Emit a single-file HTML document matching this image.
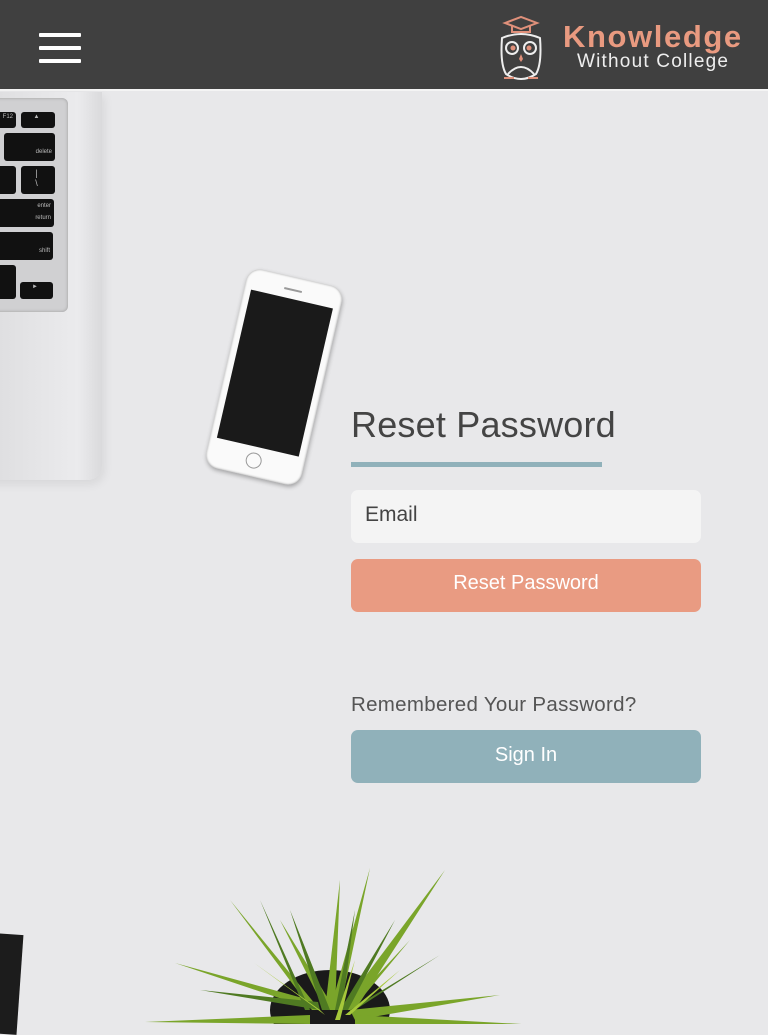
<!DOCTYPE html>
<html><head><meta charset="utf-8"><style>
*{margin:0;padding:0;box-sizing:border-box}
body{width:768px;height:1024px;overflow:hidden;background:#e8e8ea;font-family:"Liberation Sans",sans-serif;position:relative}
.hdr{position:absolute;left:0;top:0;width:768px;height:89px;background:#404040}
.line{position:absolute;left:0;top:89px;width:768px;height:2px;background:#f4f4f4}
.burger span{position:absolute;left:39px;width:42px;height:4px;background:#fff;border-radius:1px}
.abs{position:absolute}
.btn{position:absolute;left:351px;width:350px;height:53px;border-radius:7px;color:#fff;font-size:20px;text-align:center;line-height:50px}
.key{position:absolute;background:#111;border-radius:3px;color:#bbb;font-size:6px;text-align:right;padding:2px 3px 0 0}
</style></head><body>
<div class="hdr"></div>
<div class="line"></div>
<div class="burger"><span style="top:33px"></span><span style="top:46px"></span><span style="top:59px"></span></div>
<svg class="abs" style="left:496px;top:14px" width="52" height="68" viewBox="0 0 52 68">
<path d="M9 9 L25 3 L41 9 L25 15 Z" fill="none" stroke="#e0907a" stroke-width="2"/>
<path d="M16 12 V18 H34 V12" fill="none" stroke="#e0907a" stroke-width="2"/>
<path d="M6 24 Q4 50 10 60 Q25 70 40 60 Q46 50 44 24 Q25 16 6 24Z" fill="none" stroke="#eee" stroke-width="2"/>
<circle cx="16" cy="34" r="6" fill="none" stroke="#eee" stroke-width="2"/><circle cx="34" cy="34" r="6" fill="none" stroke="#eee" stroke-width="2"/>
<circle cx="17" cy="34" r="2.5" fill="#e0907a"/><circle cx="33" cy="34" r="2.5" fill="#e0907a"/>
<path d="M25 40 L23 45 L25 48 L27 45Z" fill="#e0907a"/>
<path d="M12 60 Q25 46 38 60" fill="none" stroke="#eee" stroke-width="2"/>
<path d="M8 64 h10 M32 64 h10" stroke="#e0907a" stroke-width="2"/>
</svg>
<div class="abs" style="left:563px;top:19px;font-size:31px;font-weight:bold;color:#e99a80;letter-spacing:1.6px">Knowledge</div>
<div class="abs" style="left:577px;top:51px;font-size:19px;color:#eee;letter-spacing:1.2px">Without College</div>
<div class="abs" style="left:-20px;top:92px;width:122px;height:388px;background:linear-gradient(90deg,#dcdcde,#ebebed 80%,#dadadc);border-radius:0 0 14px 0;box-shadow:2px 4px 10px rgba(0,0,0,.08)"></div>
<div class="abs" style="left:-10px;top:98px;width:78px;height:214px;background:#d0d0d2;border-radius:0 6px 6px 0;box-shadow:inset 0 0 3px #999"></div>
<div class="key" style="left:-4px;top:112px;width:20px;height:16px">F12</div>
<div class="key" style="left:21px;top:112px;width:34px;height:16px;text-align:center">▲</div>
<div class="key" style="left:4px;top:133px;width:51px;height:28px;padding-top:16px">delete</div>
<div class="key" style="left:-4px;top:166px;width:20px;height:28px"></div>
<div class="key" style="left:21px;top:166px;width:34px;height:28px;text-align:center;font-size:9px">|<br>\</div>
<div class="key" style="left:-4px;top:199px;width:58px;height:28px;padding-top:4px">enter<br><br>return</div>
<div class="key" style="left:-4px;top:232px;width:57px;height:28px;padding-top:16px">shift</div>
<div class="key" style="left:-4px;top:265px;width:20px;height:34px"></div>
<div class="key" style="left:20px;top:282px;width:33px;height:17px;text-align:center">►</div>
<div class="abs" style="left:225px;top:275px;width:98px;height:204px;background:#fafafa;border-radius:14px;transform:rotate(13deg);box-shadow:1px 2px 4px rgba(0,0,0,.3),inset 0 0 2px #999">
<div class="abs" style="left:7px;top:22px;width:84px;height:152px;background:#1a1a1a"></div>
<div class="abs" style="left:40px;top:180px;width:16px;height:16px;border:1px solid #999;border-radius:50%"></div>
<div class="abs" style="left:39px;top:12px;width:18px;height:2px;background:#999"></div>
</div>
<div class="abs" style="left:-10px;top:934px;width:30px;height:100px;background:#1c1c1c;transform:rotate(4deg)"></div>
<svg class="abs" style="left:140px;top:860px" width="420" height="164" viewBox="0 0 420 164">
<ellipse cx="190" cy="150" rx="60" ry="40" fill="#1a1a1a"/>
<g fill="#7aa52a">
<polygon points="190,150 230,8 200,150"/><polygon points="185,150 200,20 195,150"/>
<polygon points="200,150 305,10 215,150"/><polygon points="180,150 90,40 172,150"/>
<polygon points="175,150 35,103 170,140"/><polygon points="210,150 360,135 215,160"/>
<polygon points="170,155 5,162 170,164"/><polygon points="215,155 400,165 215,164"/>
<polygon points="195,150 140,60 185,150"/><polygon points="205,150 270,80 212,150"/>
</g>
<g fill="#4f7a22">
<polygon points="190,150 150,50 182,150"/><polygon points="200,150 255,60 208,150"/>
<polygon points="180,150 60,130 178,142"/><polygon points="210,150 300,95 215,150"/>
<polygon points="195,150 215,50 202,150"/><polygon points="170,150 120,40 165,150"/>
</g>
<g fill="#a6c83a">
<polygon points="185,155 110,100 180,150"/><polygon points="205,155 260,110 210,155"/><polygon points="195,160 215,100 200,160"/>
</g>
</svg>
<div class="abs" style="left:351px;top:404px;font-size:36px;color:#444;letter-spacing:0.2px">Reset Password</div>
<div class="abs" style="left:351px;top:462px;width:251px;height:5px;background:#90b1ba"></div>
<div class="abs" style="left:351px;top:490px;width:350px;height:53px;background:#f4f4f4;border-radius:7px;font-size:21px;color:#444;padding:13px 0 0 14px">Email</div>
<div class="btn" style="top:559px;background:#e99b82;line-height:48px">Reset Password</div>
<div class="abs" style="left:351px;top:693px;font-size:20.5px;color:#555;letter-spacing:0.3px">Remembered Your Password?</div>
<div class="btn" style="top:730px;background:#90b1ba;line-height:50px">Sign In</div>
</body></html>
